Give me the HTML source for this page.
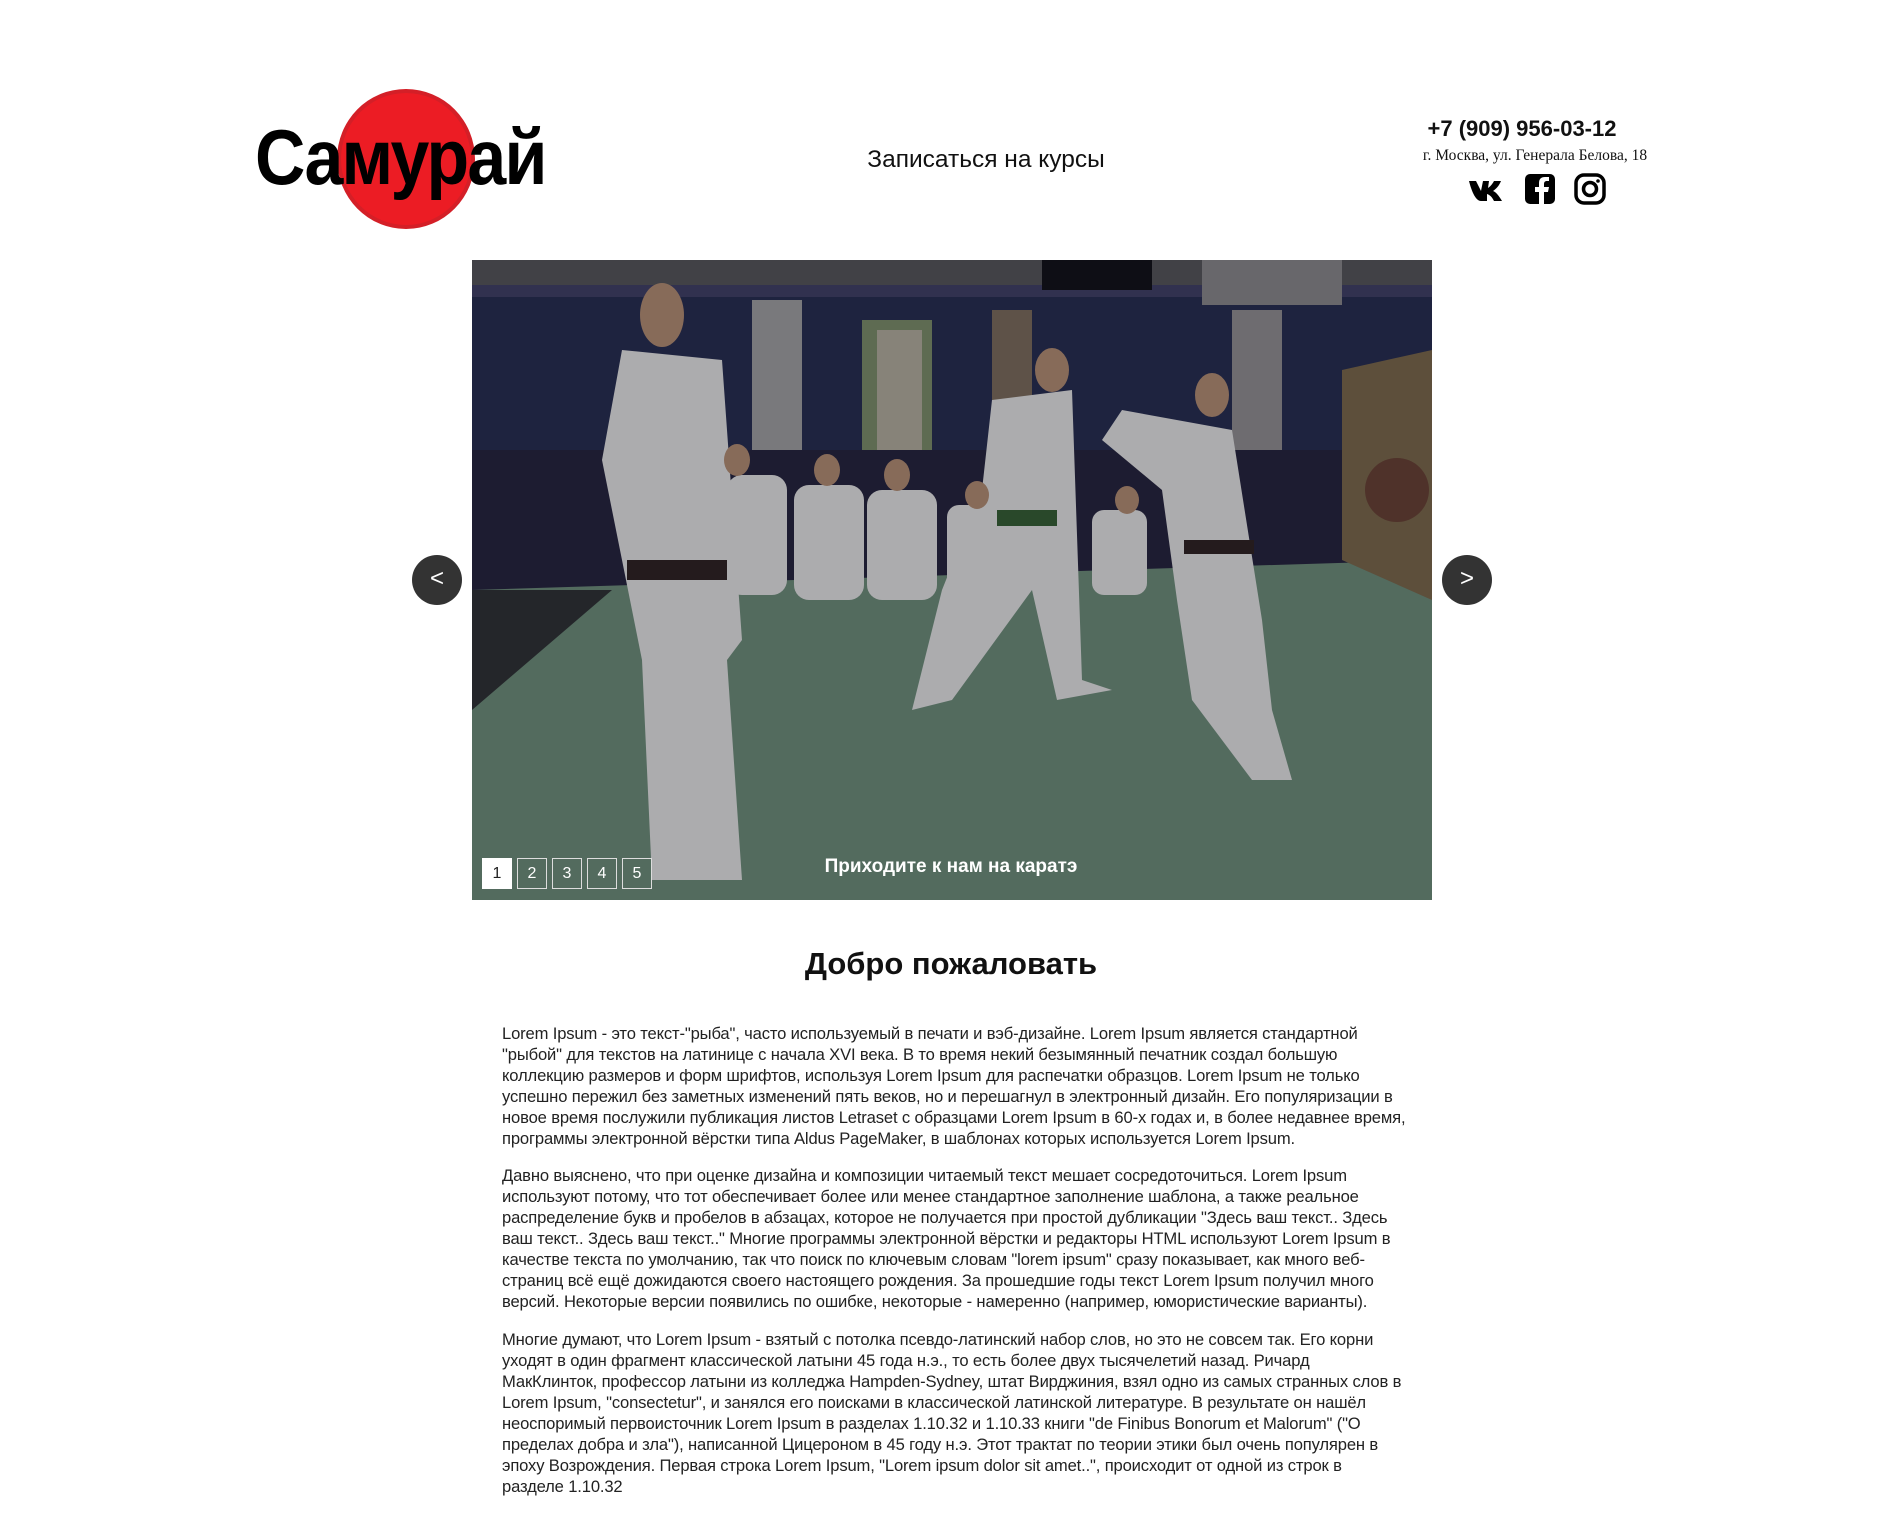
<!DOCTYPE html>
<html><head><meta charset="utf-8"><style>
*{margin:0;padding:0;box-sizing:border-box}
body{width:1902px;height:1530px;background:#fff;position:relative;overflow:hidden;font-family:"Liberation Sans","Noto Sans CJK SC",sans-serif;color:#111}
.abs{position:absolute}
.logo{left:255px;top:112px;font-size:78px;font-weight:bold;letter-spacing:-2px;color:#000;line-height:90px;white-space:nowrap;transform:scaleX(0.895);transform-origin:0 0}
.circle{left:337px;top:89px;width:138px;height:140px;border-radius:50%;background:#ec1c24;border:4px solid #d41f27}
.nav{left:836px;top:146px;width:300px;text-align:center;font-size:24.5px;color:#111}
.phone{left:1390px;top:116px;width:264px;text-align:center;font-size:22px;font-weight:bold;color:#111}
.addr{left:1390px;top:147px;width:290px;text-align:center;font-family:"Liberation Serif",serif;font-size:15.5px;color:#111}
.slider{left:472px;top:260px;width:960px;height:640px;overflow:hidden;background:#2a2d3a}
.arrow{width:50px;height:50px;border-radius:50%;background:#333;color:#fff;font-size:24px;line-height:48px;text-align:center}
.box{top:858px;width:30px;height:31px;border:1px solid #ddd;color:#fff;font-size:16px;text-align:center;line-height:29px}
.cap{left:680px;top:856px;width:542px;text-align:center;color:#fff;font-weight:bold;font-size:19px}
h1{position:absolute;left:600px;top:946px;width:702px;text-align:center;font-size:31px;font-weight:bold;color:#111}
.txt{left:502px;width:940px;font-size:16.6px;line-height:21px;color:#222;white-space:nowrap;letter-spacing:-0.15px}
</style></head><body>
<div class="abs circle"></div>
<div class="abs logo">Самурай</div>
<div class="abs nav">Записаться на курсы</div>
<div class="abs phone">+7 (909) 956-03-12</div>
<div class="abs addr">г. Москва, ул. Генерала Белова, 18</div>
<svg class="abs" style="left:1468px;top:172px" width="140" height="34" viewBox="0 0 140 34">
 <path d="M1 9h7l5 10 2-10h6l-1 7c3-2 5-5 6-7h7c-2 5-5 8-8 10 3 1 6 5 9 10h-8c-2-4-4-6-7-7v7h-6c-6 0-10-12-12-20z" fill="#000"/>
 <rect x="57" y="2" width="30" height="30" rx="5" fill="#000"/>
 <path d="M76 32V20h4l1-5h-5v-3c0-2 1-3 3-3h2V5h-4c-4 0-6 2-6 6v4h-4v5h4v12z" fill="#fff"/>
 <rect x="108" y="3" width="28" height="28" rx="8" fill="none" stroke="#000" stroke-width="3.5"/>
 <circle cx="122" cy="17" r="6.5" fill="none" stroke="#000" stroke-width="3.5"/>
 <circle cx="130" cy="9" r="1.8" fill="#000"/>
</svg>
<div class="abs slider">
<svg width="960" height="640" viewBox="0 0 960 640">
 <rect width="960" height="640" fill="#232848"/>
 <rect width="960" height="25" fill="#4a4a50"/>
 <rect x="0" y="25" width="960" height="12" fill="#38385a"/>
 <rect x="280" y="40" width="50" height="150" fill="#8a8a8e"/>
 <rect x="390" y="60" width="70" height="160" fill="#6b7a5e"/>
 <rect x="405" y="70" width="45" height="120" fill="#9a968a"/>
 <rect x="520" y="50" width="40" height="140" fill="#6b5e52"/>
 <rect x="760" y="50" width="50" height="150" fill="#7e7c80"/>
 <rect x="730" y="0" width="140" height="45" fill="#77767a"/>
 <rect x="570" y="0" width="110" height="30" fill="#101018"/>
 <rect x="0" y="190" width="960" height="140" fill="#222038"/>
 <polygon points="0,330 960,300 960,640 0,640" fill="#5f7a6c"/>
 <polygon points="0,330 140,330 0,450" fill="#2a2c30"/>
 <polygon points="870,110 960,90 960,340 870,300" fill="#6a5a44"/>
 <circle cx="925" cy="230" r="32" fill="#5a3a30"/>
 <g fill="#c4c4c6">
  <rect x="255" y="215" width="60" height="120" rx="15"/>
  <rect x="322" y="225" width="70" height="115" rx="15"/>
  <rect x="395" y="230" width="70" height="110" rx="15"/>
  <rect x="475" y="245" width="50" height="95" rx="12"/>
  <rect x="620" y="250" width="55" height="85" rx="12"/>
  <polygon points="150,90 250,100 270,380 255,400 270,620 180,620 170,400 130,200"/>
  <polygon points="520,140 600,130 610,420 640,430 585,440 560,330 480,440 440,450 470,330 510,230"/>
  <polygon points="650,150 760,170 790,360 800,450 820,520 780,520 720,440 705,340 690,230 630,180"/>
 </g>
 <rect x="155" y="300" width="100" height="20" fill="#2a1f22"/>
 <rect x="525" y="250" width="60" height="16" fill="#2f5230"/>
 <rect x="712" y="280" width="70" height="14" fill="#2a1f22"/>
 <g fill="#9a7a66">
  <ellipse cx="190" cy="55" rx="22" ry="32"/>
  <ellipse cx="580" cy="110" rx="17" ry="22"/>
  <ellipse cx="740" cy="135" rx="17" ry="22"/>
  <ellipse cx="265" cy="200" rx="13" ry="16"/>
  <ellipse cx="355" cy="210" rx="13" ry="16"/>
  <ellipse cx="425" cy="215" rx="13" ry="16"/>
  <ellipse cx="505" cy="235" rx="12" ry="14"/>
  <ellipse cx="655" cy="240" rx="12" ry="14"/>
 </g>
 <rect width="960" height="640" fill="#000" opacity="0.12"/>
</svg>
</div>
<div class="abs arrow" style="left:412px;top:555px">&lt;</div>
<div class="abs arrow" style="left:1442px;top:555px">&gt;</div>
<div class="abs box" style="left:482px;background:#fff;color:#222;border-color:#fff">1</div>
<div class="abs box" style="left:517px">2</div>
<div class="abs box" style="left:552px">3</div>
<div class="abs box" style="left:587px">4</div>
<div class="abs box" style="left:622px">5</div>
<div class="abs cap">Приходите к нам на каратэ</div>
<h1>Добро пожаловать</h1>
<div class="abs txt" style="top:1023px">Lorem Ipsum - это текст-"рыба", часто используемый в печати и вэб-дизайне. Lorem Ipsum является стандартной<br>"рыбой" для текстов на латинице с начала XVI века. В то время некий безымянный печатник создал большую<br>коллекцию размеров и форм шрифтов, используя Lorem Ipsum для распечатки образцов. Lorem Ipsum не только<br>успешно пережил без заметных изменений пять веков, но и перешагнул в электронный дизайн. Его популяризации в<br>новое время послужили публикация листов Letraset с образцами Lorem Ipsum в 60-х годах и, в более недавнее время,<br>программы электронной вёрстки типа Aldus PageMaker, в шаблонах которых используется Lorem Ipsum.</div>
<div class="abs txt" style="top:1165px">Давно выяснено, что при оценке дизайна и композиции читаемый текст мешает сосредоточиться. Lorem Ipsum<br>используют потому, что тот обеспечивает более или менее стандартное заполнение шаблона, а также реальное<br>распределение букв и пробелов в абзацах, которое не получается при простой дубликации "Здесь ваш текст.. Здесь<br>ваш текст.. Здесь ваш текст.." Многие программы электронной вёрстки и редакторы HTML используют Lorem Ipsum в<br>качестве текста по умолчанию, так что поиск по ключевым словам "lorem ipsum" сразу показывает, как много веб-<br>страниц всё ещё дожидаются своего настоящего рождения. За прошедшие годы текст Lorem Ipsum получил много<br>версий. Некоторые версии появились по ошибке, некоторые - намеренно (например, юмористические варианты).</div>
<div class="abs txt" style="top:1329px">Многие думают, что Lorem Ipsum - взятый с потолка псевдо-латинский набор слов, но это не совсем так. Его корни<br>уходят в один фрагмент классической латыни 45 года н.э., то есть более двух тысячелетий назад. Ричард<br>МакКлинток, профессор латыни из колледжа Hampden-Sydney, штат Вирджиния, взял одно из самых странных слов в<br>Lorem Ipsum, "consectetur", и занялся его поисками в классической латинской литературе. В результате он нашёл<br>неоспоримый первоисточник Lorem Ipsum в разделах 1.10.32 и 1.10.33 книги "de Finibus Bonorum et Malorum" ("О<br>пределах добра и зла"), написанной Цицероном в 45 году н.э. Этот трактат по теории этики был очень популярен в<br>эпоху Возрождения. Первая строка Lorem Ipsum, "Lorem ipsum dolor sit amet..", происходит от одной из строк в<br>разделе 1.10.32</div>
</body></html>
